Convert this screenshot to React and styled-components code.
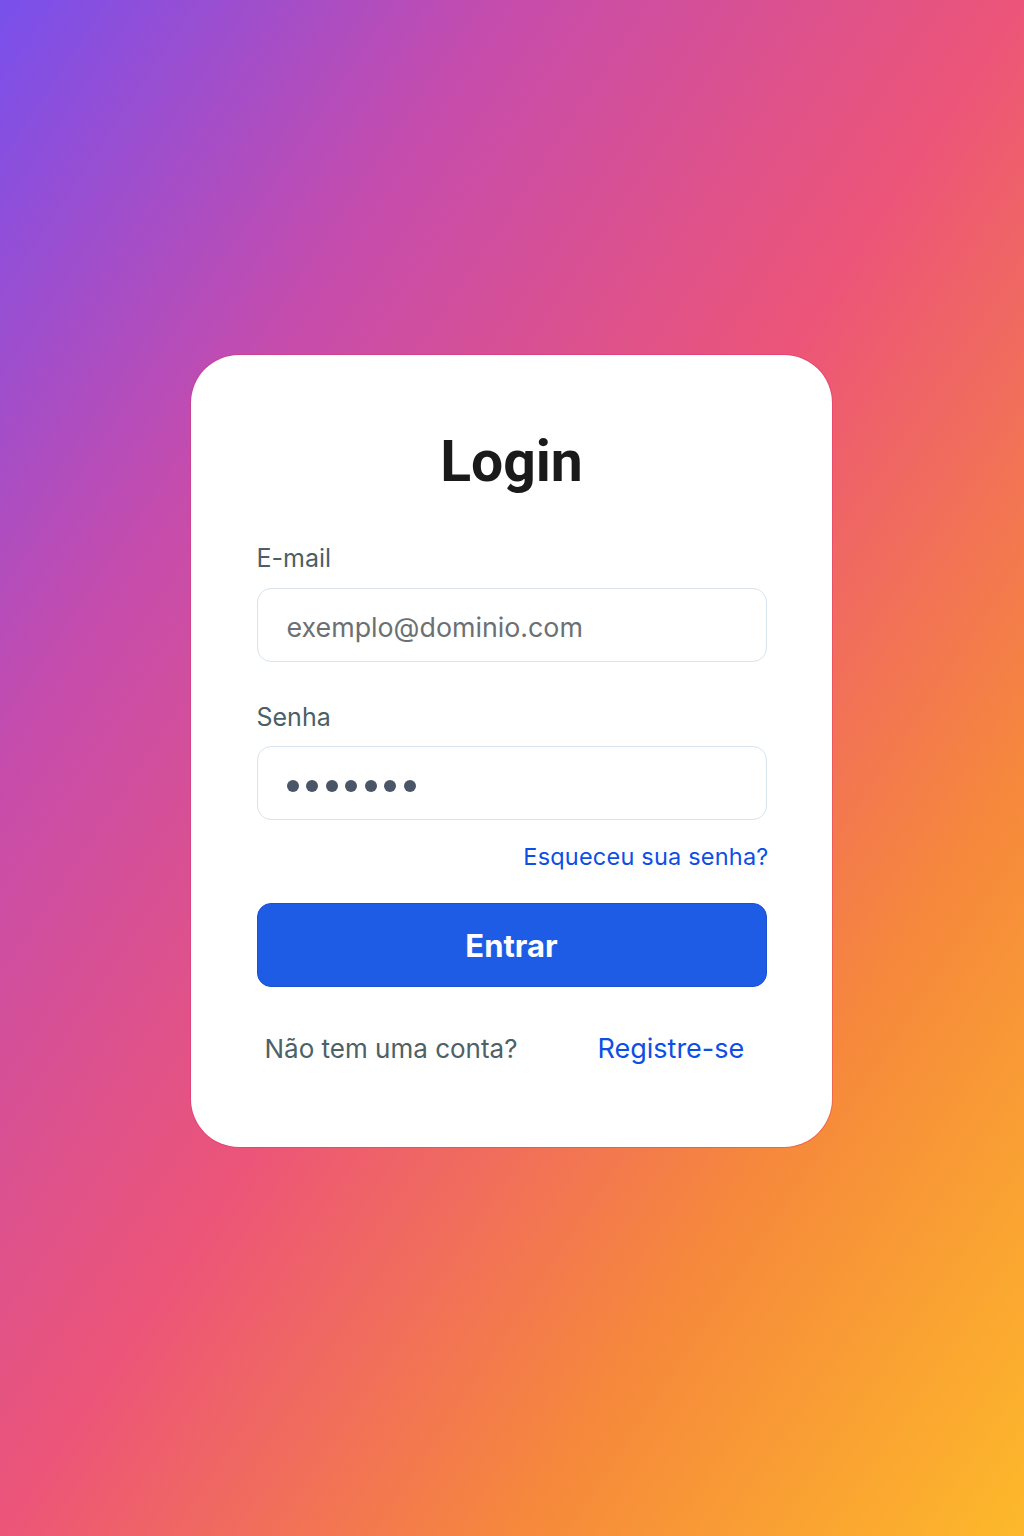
import React from 'react';
import styled, { createGlobalStyle } from 'styled-components';

const GlobalStyle = createGlobalStyle`
  * {
    box-sizing: border-box;
  }

  body {
    margin: 0;
    font-family: Inter, "Noto Sans", "Liberation Sans", sans-serif;
  }
`;

const Page = styled.div`
  min-height: 1536px;
  padding-top: 355px;
  display: flex;
  justify-content: center;
  align-items: flex-start;
  background: linear-gradient(
    to bottom right,
    #7850ec 0%,
    #c64cac 25%,
    #ec5578 50%,
    #f6883c 75%,
    #fdb92a 100%
  );
`;

const Card = styled.div`
  width: 641px;
  margin-left: -2px;
  padding: 75px 65px 80px 66px;
  background: #ffffff;
  border-radius: 48px;
  box-shadow: 0 0 0 1px rgba(220, 40, 110, 0.35);
  display: flex;
  flex-direction: column;
`;

const Title = styled.h1`
  margin: 0 0 48px;
  font-family: Roboto, Inter, sans-serif;
  font-size: 57px;
  line-height: 64px;
  font-weight: 700;
  color: #1a1a1a;
  text-align: center;
`;

const Label = styled.label`
  display: block;
  font-size: 25px;
  line-height: 32px;
  color: #4b5f66;
  margin-bottom: ${(p) => p.$gap}px;
`;

const Input = styled.input`
  display: block;
  width: 100%;
  height: 74px;
  padding: 4px 29px 0;
  border: 1.5px solid #d7e4ee;
  border-radius: 14px;
  font-family: inherit;
  font-size: 26.8px;
  color: #333;
  outline: none;
  margin-bottom: 39px;

  &::placeholder {
    color: #6b7074;
  }
`;

const PasswordBox = styled.div`
  height: 74px;
  padding: 6px 29px 0;
  border: 1.5px solid #d7e4ee;
  border-radius: 14px;
  display: flex;
  align-items: center;
  gap: 7.5px;
`;

const Dot = styled.span`
  width: 12px;
  height: 12px;
  border-radius: 50%;
  background: #4a5568;
`;

const Forgot = styled.a`
  align-self: flex-end;
  margin: 22px -2px 31px 0;
  font-size: 23.5px;
  line-height: 30px;
  color: #0d4fe6;
  text-decoration: none;
  letter-spacing: 0.2px;
`;

const Button = styled.button`
  height: 84px;
  width: 100%;
  border: 1.5px solid #1a4fd6;
  border-radius: 14px;
  background: #1f5ce6;
  color: #ffffff;
  font-family: inherit;
  font-size: 31px;
  font-weight: 700;
  cursor: pointer;
`;

const Footer = styled.div`
  margin-top: 44px;
  padding-left: 8px;
  display: flex;
  align-items: center;
  gap: 80px;
  font-size: 26px;
  line-height: 36px;
`;

const Muted = styled.span`
  color: #4d6166;
`;

const Link = styled.a`
  color: #0d4fe6;
  font-size: 27px;
  text-decoration: none;
`;

export default function App() {
  return (
    <>
      <GlobalStyle />
      <Page>
        <Card>
          <Title>Login</Title>
          <Label $gap={14}>E-mail</Label>
          <Input type="email" placeholder="exemplo@dominio.com" />
          <Label $gap={13}>Senha</Label>
          <PasswordBox>
            {Array.from({ length: 7 }).map((_, i) => (
              <Dot key={i} />
            ))}
          </PasswordBox>
          <Forgot href="#">Esqueceu sua senha?</Forgot>
          <Button>Entrar</Button>
          <Footer>
            <Muted>Não tem uma conta?</Muted>
            <Link href="#">Registre-se</Link>
          </Footer>
        </Card>
      </Page>
    </>
  );
}
